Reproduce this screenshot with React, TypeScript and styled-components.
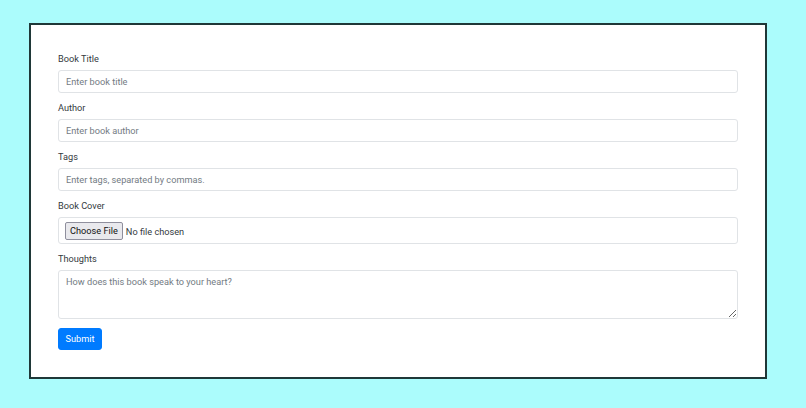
import React from "react";
import styled, { createGlobalStyle } from "styled-components";

const GlobalStyle = createGlobalStyle`
  html, body {
    margin: 0;
    padding: 0;
    background: #abfcfc;
  }
  body {
    font-family: Roboto, "Liberation Sans", Arial, sans-serif;
    color: #212529;
  }
  * { box-sizing: border-box; }
`;

const Page = styled.div`
  padding: 23px 39px 29px 29px;
`;

const Card = styled.form`
  background: #ffffff;
  border: 2px solid #1f3838;
  padding: 27px;
  display: flex;
  flex-direction: column;
`;

const Group = styled.div<{ $mb?: number }>`
  display: flex;
  flex-direction: column;
  margin-bottom: ${(p) => p.$mb ?? 8}px;
`;

const Label = styled.label`
  font-size: 9.2px;
  line-height: 14px;
  margin-bottom: 4px;
  color: #343a40;
`;

const fieldBase = `
  width: 100%;
  border: 1px solid #e0e3e6;
  border-radius: 3px;
  background: #fff;
  font-family: Roboto, "Liberation Sans", Arial, sans-serif;
  font-size: 9.2px;
  color: #495057;
  outline: none;
  &::placeholder { color: #737b83; opacity: 1; }
`;

const TextInput = styled.input`
  ${fieldBase}
  height: 23px;
  padding: 0 7px;
`;

const FileBox = styled.div`
  ${fieldBase}
  height: 27px;
  padding: 3px 6px;
  display: flex;
  align-items: center;
`;

const FileInput = styled.input`
  font-family: Roboto, "Liberation Sans", Arial, sans-serif;
  font-size: 9.2px;
  color: #343a40;
  &::file-selector-button {
    font-family: Roboto, "Liberation Sans", Arial, sans-serif;
    font-size: 9.2px;
    height: 18px;
    padding: 0 4px;
    margin-right: 3px;
    background: #e9e9ed;
    border: 1px solid #8f8f9d;
    border-radius: 2px;
    color: #111;
  }
`;

const TextArea = styled.textarea`
  ${fieldBase}
  height: 49px;
  padding: 5px 7px;
  resize: vertical;
  display: block;
`;

const SubmitButton = styled.button`
  align-self: flex-start;
  height: 22px;
  width: 44px;
  padding: 0;
  background: #007bff;
  color: #fff;
  border: 1px solid #007bff;
  border-radius: 3px;
  font-family: Roboto, "Liberation Sans", Arial, sans-serif;
  font-size: 9.2px;
  line-height: 20px;
  cursor: pointer;
`;

export default function App() {
  return (
    <>
      <GlobalStyle />
      <Page>
        <Card onSubmit={(e) => e.preventDefault()}>
          <Group>
            <Label htmlFor="title">Book Title</Label>
            <TextInput id="title" placeholder="Enter book title" />
          </Group>
          <Group>
            <Label htmlFor="author">Author</Label>
            <TextInput id="author" placeholder="Enter book author" />
          </Group>
          <Group>
            <Label htmlFor="tags">Tags</Label>
            <TextInput id="tags" placeholder="Enter tags, separated by commas." />
          </Group>
          <Group>
            <Label htmlFor="cover">Book Cover</Label>
            <FileBox>
              <FileInput id="cover" type="file" />
            </FileBox>
          </Group>
          <Group $mb={9}>
            <Label htmlFor="thoughts">Thoughts</Label>
            <TextArea id="thoughts" placeholder="How does this book speak to your heart?" />
          </Group>
          <SubmitButton type="submit">Submit</SubmitButton>
        </Card>
      </Page>
    </>
  );
}
